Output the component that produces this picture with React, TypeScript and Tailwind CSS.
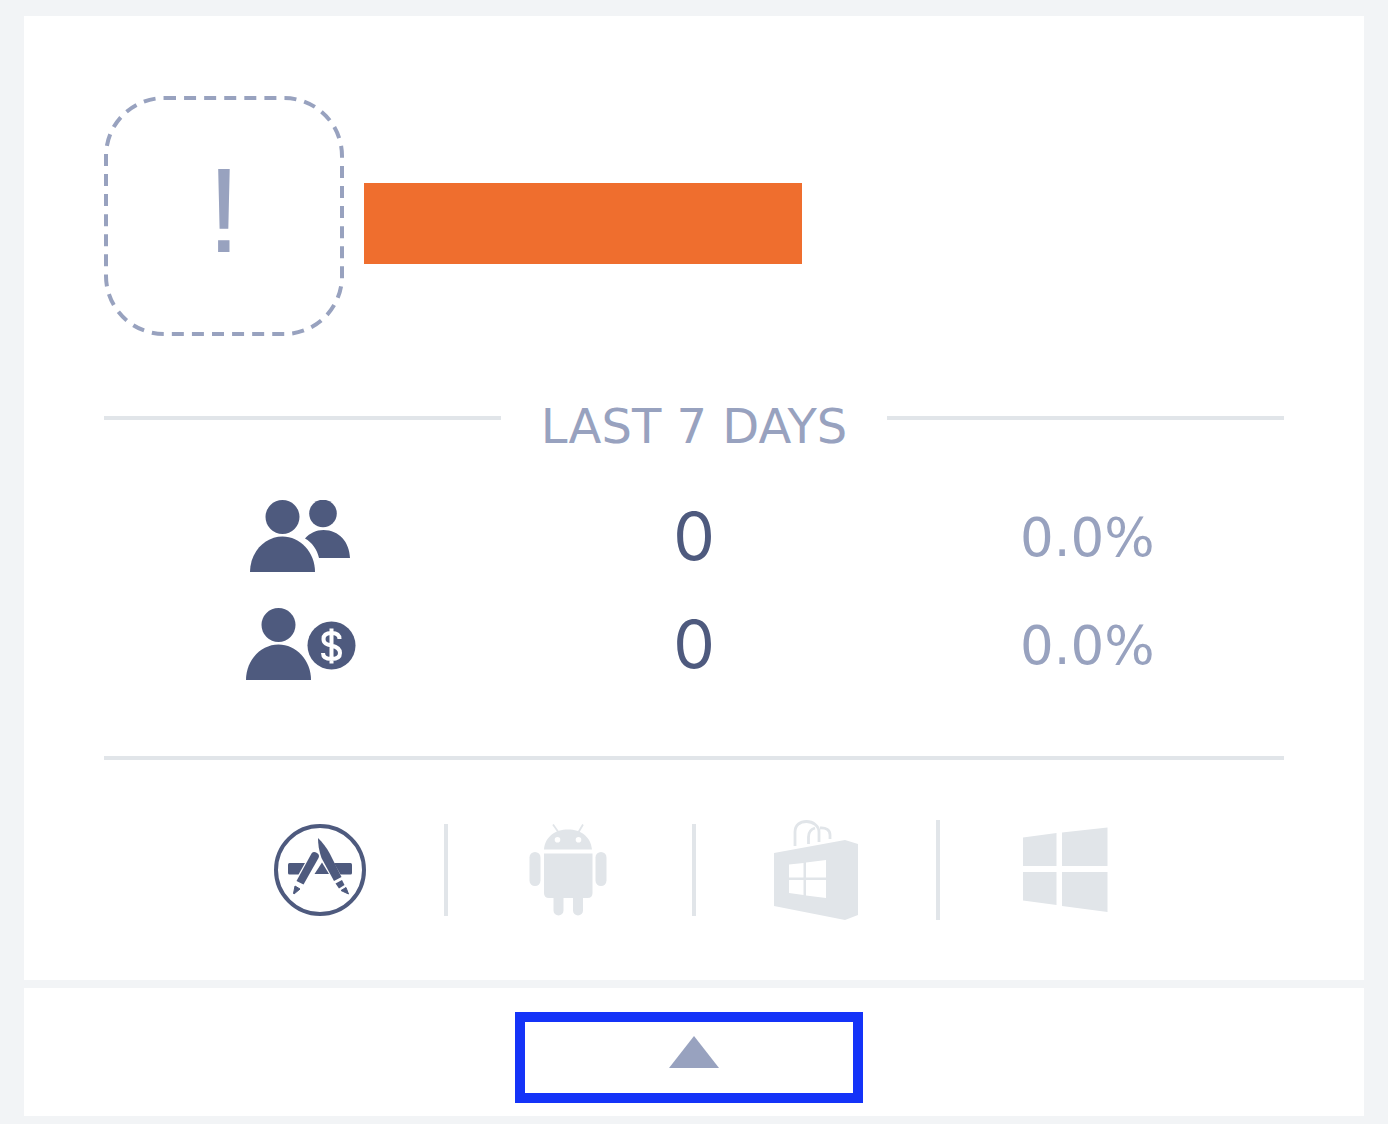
import React from 'react';

interface IconProps {
  className?: string;
}

const UsersIcon: React.FC<IconProps> = ({ className }) => (
  <svg viewBox="0 0 100 72" className={className} fill="currentColor" aria-hidden="true">
    <circle cx="32.500" cy="17" r="17" />
    <path d="M0 72C0 52 15 36.500 32.500 36.500S65 52 65 72z" />
    <circle cx="73" cy="13.500" r="13.800" />
    <path d="M55 38.500C60 33 66 30 73.500 30C89 30 99.500 42 100 58H69C67 49 62 42.500 55 38.500z" />
  </svg>
);

const PayingUserIcon: React.FC<IconProps> = ({ className }) => (
  <svg viewBox="0 0 110 72" className={className} fill="currentColor" aria-hidden="true">
    <circle cx="32.500" cy="17" r="17" />
    <path d="M0 72C0 52 15 36.500 32.500 36.500S65 52 65 72z" />
    <circle cx="85.500" cy="37.500" r="24" />
    <path
      d="M85.500 20.500V55.500M93.500 31C93.500 26.500 90 25 85.500 25S77.500 26.500 77.500 31C77.500 35.500 81 36.500 85.500 37.500S94 40 94 45S90 51 85.500 51S77 49.500 77 45"
      fill="none"
      stroke="#fff"
      strokeWidth="4"
    />
  </svg>
);

const AppStoreIcon: React.FC<IconProps> = ({ className }) => (
  <svg viewBox="0 0 92 92" className={className} fill="currentColor" aria-hidden="true">
    <circle cx="46" cy="46" r="44" fill="none" stroke="currentColor" strokeWidth="4" />
    <path d="M15.500 39H31L24.500 50.500H15.500Q14 50.500 14 49V40.500Q14 39 15.500 39z" />
    <path d="M48 38.500L55 50H40.500z" />
    <path d="M60 39H76.500Q78 39 78 40.500V49Q78 50.500 76.500 50.500H66.500z" />
    <path d="M37.500 29.500Q39.500 27 43 29Q46 31 44.500 34L29.500 60.500L22.500 57z" />
    <path d="M21 62L26 65L20 70L19.500 69.500z" stroke="currentColor" />
    <path d="M44 14C48 18 53 24 56 30L67.500 53L60 57L47.500 34C45 27 44 20 44 14z" />
    <path d="M61.500 59.500L68 56L70.500 61L65 64.500z" />
    <path d="M67 66.500L72 63.500L74.500 70z" stroke="currentColor" />
  </svg>
);

const AndroidIcon: React.FC<IconProps> = ({ className }) => (
  <svg viewBox="-2 0 88 92" className={className} fill="currentColor" aria-hidden="true">
    <path d="M25 .500L31 9M55 .500L50 9" stroke="currentColor" strokeWidth="1.800" />
    <path
      fillRule="evenodd"
      d="M16 25.500C17 13 27 5.500 40 5.500S63 13 64 25.500zM29.500 13A2.800 2.800 0 1 0 29.500 18.600A2.800 2.800 0 1 0 29.500 13zM50.500 13A2.800 2.800 0 1 0 50.500 18.600A2.800 2.800 0 1 0 50.500 13z"
    />
    <path d="M16 29.500H64.500V69Q64.500 74 59.500 74H21Q16 74 16 69z" />
    <rect x="1.500" y="28" width="11" height="34" rx="5.500" />
    <rect x="67.500" y="28" width="11" height="34" rx="5.500" />
    <path d="M25.500 72H35.500V86.500A5 5 0 0 1 25.500 86.500zM45 72H55V86.500A5 5 0 0 1 45 86.500z" />
  </svg>
);

const WindowsStoreIcon: React.FC<IconProps> = ({ className }) => (
  <svg viewBox="0 0 84 100" className={className} fill="currentColor" aria-hidden="true">
    <path
      fillRule="evenodd"
      d="M0 33L71 20L84 24V95L71 100L0 86zM15 44.500V57.500H29.500V43zM32 42.500V57.500H52V40zM15 60V73L29.500 75V60zM32 60V75.500L52 78V60z"
    />
    <path
      d="M21 26V12C21 5 26 1.500 32.500 1.500S45 6 45 12V22M34.500 24V17C34.500 12 37.500 9 41 8M46 8C52 7.500 56 10 56 15V19"
      fill="none"
      stroke="currentColor"
      strokeWidth="2.800"
    />
  </svg>
);

const WindowsIcon: React.FC<IconProps> = ({ className }) => (
  <svg viewBox="0 0 96 92" className={className} fill="currentColor" aria-hidden="true">
    <path d="M5 13.500L38.500 9V42H5zM44 8.500L89.500 3.500V42H44zM5 48H38.500V81L5 76.500zM44 48H89.500V88L44 82z" />
  </svg>
);

const stats = [
  { label: 'Users', icon: <UsersIcon className="h-[72px] w-[102px] pr-[2px]" />, value: '0', change: '0.0%' },
  { label: 'Paying users', icon: <PayingUserIcon className="h-[72px] w-[110px]" />, value: '0', change: '0.0%' },
];

const platforms = [
  { name: 'App Store', active: true, icon: <AppStoreIcon className="h-[92px] w-[92px]" /> },
  { name: 'Android', active: false, icon: <AndroidIcon className="h-[92px] w-[88px]" /> },
  { name: 'Windows Store', active: false, icon: <WindowsStoreIcon className="h-[100px] w-[84px]" /> },
  { name: 'Windows', active: false, icon: <WindowsIcon className="h-[92px] w-[96px]" /> },
];

const App: React.FC = () => (
  <main className="min-h-screen bg-[#f2f4f6] px-6 pt-4 pb-2 font-['DejaVu_Sans',sans-serif]">
    <article className="bg-white px-20 pt-20 pb-[60px]">
      <header className="flex items-center gap-5">
        <div className="relative flex size-60 items-center justify-center pb-3 text-[#98a2bf]">
          <svg viewBox="0 0 240 240" className="absolute inset-0 size-full" fill="none" aria-hidden="true">
            <path
              d="M60 2H180A58 58 0 0 1 238 60V180A58 58 0 0 1 180 238H60A58 58 0 0 1 2 180V60A58 58 0 0 1 60 2z"
              stroke="currentColor"
              strokeWidth="4"
              strokeDasharray="12 8.080"
            />
          </svg>
          <span className="font-['Liberation_Sans',sans-serif] text-[120px] leading-none">!</span>
        </div>
        <div className="mt-[14px] h-[81px] w-[438px] bg-[#ef6e2e]" />
      </header>

      <section>
        <div className="mt-[60px] flex items-start gap-10">
          <div className="mt-5 h-1 flex-1 bg-[#e1e5e9]" />
          <h2 className="text-5xl leading-[60px] text-[#98a2bf]">LAST 7 DAYS</h2>
          <div className="mt-5 h-1 flex-1 bg-[#e1e5e9]" />
        </div>

        <ul className="mt-[26px]">
          {stats.map(stat => (
            <li key={stat.label} aria-label={stat.label} className="grid h-[108px] grid-cols-3 items-center justify-items-center">
              <span className="text-[#4e5a7e]">{stat.icon}</span>
              <span className="font-[Inter,sans-serif] text-[66px] leading-none text-[#4e5a7e]">{stat.value}</span>
              <span className="pt-[2px] text-[53px] leading-none text-[#98a2bf]">{stat.change}</span>
            </li>
          ))}
        </ul>
      </section>

      <ul className="mt-[58px] flex items-center justify-center border-t-4 border-[#e1e5e9] pt-[60px]">
        {platforms.map(platform => (
          <li
            key={platform.name}
            aria-label={platform.name}
            className={`border-r-4 border-[#e1e5e9] px-[78px] last:border-r-0 ${platform.active ? 'text-[#4e5a7e]' : 'text-[#e1e5e9]'}`}
          >
            {platform.icon}
          </li>
        ))}
      </ul>
    </article>

    <footer className="mt-2 flex h-32 items-start justify-center bg-white pt-6">
      <button
        type="button"
        aria-label="Collapse"
        className="mr-[10px] flex h-[91px] w-[348px] items-start justify-center border-[10px] border-[#1433f8] pt-[14px] pl-[10px] text-[#98a2bf]"
      >
        <svg viewBox="0 0 50 32" className="h-8 w-[50px]" fill="currentColor" aria-hidden="true">
          <path d="M25 0L50 32H0z" />
        </svg>
      </button>
    </footer>
  </main>
);

export default App;
